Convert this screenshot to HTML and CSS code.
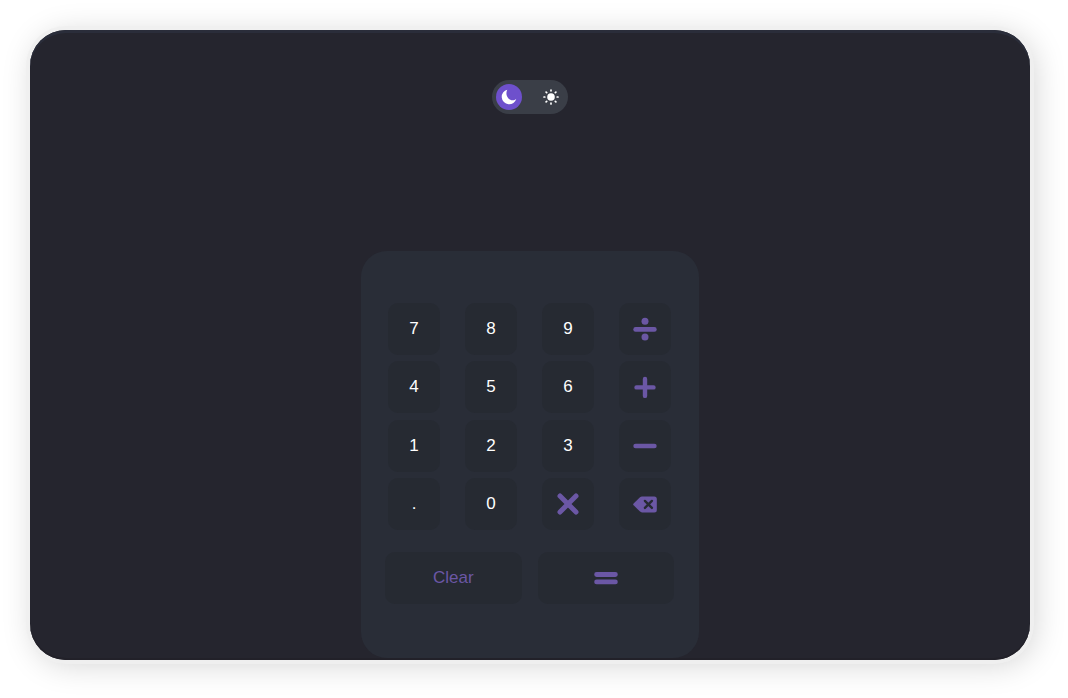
FILE: index.html
```html
<!DOCTYPE html>
<html lang="en">
<head>
<meta charset="utf-8">
<meta name="viewport" content="width=device-width, initial-scale=1">
<title>Calculator</title>
<link rel="stylesheet" href="styles.css">
</head>
<body>
<main class="app">
  <div class="theme" role="radiogroup" aria-label="Theme">
    <label class="theme-option">
      <input class="theme-input" type="radio" name="theme" aria-label="Dark" checked>
      <svg class="theme-icon" viewBox="0 0 16 16" aria-hidden="true"><path fill="currentColor" d="M6.300.7A7.400 7.400 0 1 0 15.300 9.700C13 12 9.500 11.600 7.500 9.500 5.200 7.200 4.800 3.500 6.300.7z"/></svg>
    </label>
    <label class="theme-option">
      <input class="theme-input" type="radio" name="theme" aria-label="Light">
      <svg class="theme-icon" viewBox="0 0 16 16" aria-hidden="true"><circle cx="8" cy="8" r="3.8" fill="currentColor"/><path d="M8 1v.8M8 14.200v.8M1 8h.8M14.200 8h.8M3.100 3.100l.6.6M12.300 12.300l.6.6M3.100 12.900l.6-.6M12.300 3.700l.6-.6" stroke="currentColor" stroke-width="1.700" stroke-linecap="round"/></svg>
    </label>
  </div>
  <section class="calculator" aria-label="Calculator">
    <div class="keys">
      <button class="key" type="button">7</button>
      <button class="key" type="button">8</button>
      <button class="key" type="button">9</button>
      <button class="key key-accent" type="button" aria-label="Divide"><svg class="key-icon" viewBox="0 0 24 24"><path d="M2.600 12.400h18.800" stroke="currentColor" stroke-width="4.600" stroke-linecap="round"/><circle cx="12" cy="4.300" r="3.500" fill="currentColor"/><circle cx="12" cy="20" r="3.500" fill="currentColor"/></svg></button>
      <button class="key" type="button">4</button>
      <button class="key" type="button">5</button>
      <button class="key" type="button">6</button>
      <button class="key key-accent" type="button" aria-label="Add"><svg class="key-icon" viewBox="0 0 24 24"><path d="M3.500 12.400h17M12 3.900v17" stroke="currentColor" stroke-width="4.400" stroke-linecap="round"/></svg></button>
      <button class="key" type="button">1</button>
      <button class="key" type="button">2</button>
      <button class="key" type="button">3</button>
      <button class="key key-accent" type="button" aria-label="Subtract"><svg class="key-icon" viewBox="0 0 24 24"><path d="M2.600 12h18.800" stroke="currentColor" stroke-width="4.600" stroke-linecap="round"/></svg></button>
      <button class="key" type="button">.</button>
      <button class="key" type="button">0</button>
      <button class="key key-accent" type="button" aria-label="Multiply"><svg class="key-icon" viewBox="0 0 24 24"><path d="M4 4l16 16M20 4L4 20" stroke="currentColor" stroke-width="5" stroke-linecap="round"/></svg></button>
      <button class="key key-accent" type="button" aria-label="Delete"><svg class="key-icon" viewBox="0 0 24 24"><path fill="currentColor" d="M.6 11.500L7 5.200a3 3 0 0 1 2-.8h12.300a2.500 2.500 0 0 1 2.500 2.500v11a2.500 2.500 0 0 1-2.500 2.500H9a3 3 0 0 1-2-.8L.6 13.300a1.300 1.300 0 0 1 0-1.800z"/><path class="cutout" d="M11.900 8.900l7 7M18.900 8.900l-7 7" stroke-width="2.400" stroke-linecap="round"/></svg></button>
    </div>
    <div class="actions">
      <button class="key key-accent" type="button">Clear</button>
      <button class="key key-accent" type="button" aria-label="Equals"><svg class="key-icon" viewBox="0 0 24 24"><path d="M2.600 8.500h18.800M2.600 15.900h18.800" stroke="currentColor" stroke-width="4.800" stroke-linecap="round"/></svg></button>
    </div>
  </section>
</main>
</body>
</html>
```
FILE: styles.css
```css
* {
  box-sizing: border-box;
}

body {
  margin: 0;
  min-height: 100vh;
  padding: 30px 38px 38px 30px;
  display: flex;
  background: #ffffff;
  font-family: "Liberation Sans", Arial, sans-serif;
}

.app {
  flex: 1;
  display: flex;
  flex-direction: column;
  align-items: center;
  justify-content: space-between;
  padding: 50px 24px 2px;
  border-radius: 36px;
  background: #25252e;
  box-shadow: inset 0 3px 0 #2a2d3a, inset 0 -2px 0 #222129, 0 0 0 4px rgba(240, 240, 240, 0.9), 4px 4px 32px rgba(0, 0, 0, 0.18);
}

.theme {
  display: flex;
  justify-content: space-between;
  width: 76px;
  padding: 4px;
  border-radius: 17px;
  background: #3a3e47;
  color: #ffffff;
}

.theme-option {
  position: relative;
  display: flex;
  align-items: center;
  justify-content: center;
  width: 26px;
  height: 26px;
  border-radius: 50%;
  cursor: pointer;
}

.theme-option:has(:checked) {
  background: #6e50cc;
}

.theme-input {
  position: absolute;
  inset: 0;
  margin: 0;
  opacity: 0;
}

.theme-icon {
  width: 16px;
  height: 16px;
}

.calculator {
  display: flex;
  flex-direction: column;
  gap: 22px;
  width: 338px;
  max-width: 100%;
  padding: 52px 25px 54px 24px;
  border-radius: 26px;
  background: #292d37;
}

.keys {
  display: grid;
  grid-template-columns: repeat(4, 52px);
  justify-content: space-between;
  align-content: space-between;
  min-height: 227px;
  padding: 0 3px;
}

.actions {
  display: grid;
  grid-template-columns: 1fr 1fr;
  gap: 16px;
}

.key {
  display: flex;
  align-items: center;
  justify-content: center;
  height: 52px;
  padding: 0;
  border: 0;
  border-radius: 10px;
  background: #262a32;
  color: #ffffff;
  font: 17px "Liberation Sans", Arial, sans-serif;
  cursor: pointer;
}

.key-accent {
  color: #6b57a5;
}

.key-icon {
  width: 24px;
  height: 24px;
  fill: none;
}

.cutout {
  stroke: #262a32;
}
```
